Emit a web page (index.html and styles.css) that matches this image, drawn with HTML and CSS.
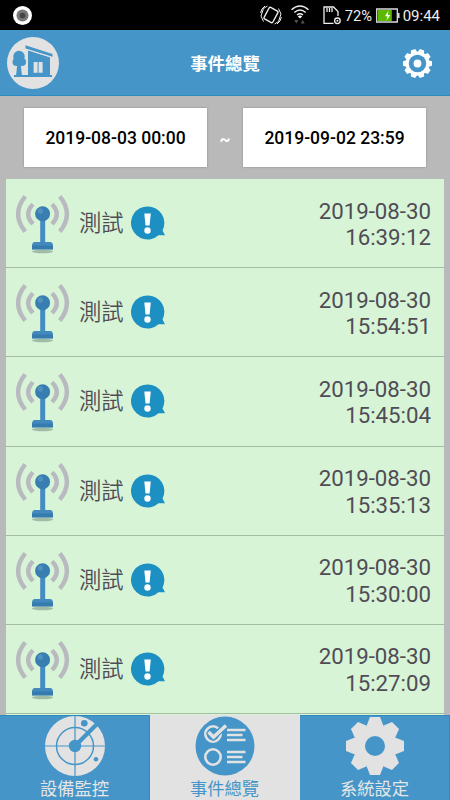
FILE: index.html
```html
<!DOCTYPE html>
<html lang="zh-Hant">
<head>
<meta charset="utf-8">
<title>事件總覽</title>
<link rel="stylesheet" href="styles.css">
</head>
<body>
<svg class="defs" width="0" height="0">
  <defs>
    <symbol id="sensor" viewBox="0 0 56 62">
      <ellipse cx="27.500" cy="57.500" rx="10.500" ry="1.800" fill="#7c9685" opacity=".6"/>
      <g fill="none" stroke="#b9bac0" stroke-width="4.400">
        <path d="M10.200 2.300Q-4 20 10.200 37.700"/>
        <path d="M44.800 2.300Q59 20 44.800 37.700"/>
        <path d="M18 10.200Q8.400 20 18 30"/>
        <path d="M37 10.200Q46.600 20 37 30"/>
      </g>
      <path d="M25.200 26h5v24h-5z" fill="#458cc0"/>
      <path d="M20 48h15q3 0 3 4H17q0-4 3-4z" fill="#4289bd"/>
      <path d="M17 51.500h21v4.100H17z" fill="#367bad"/>
      <circle cx="27.600" cy="19.800" r="7.500" fill="#397eb1"/>
      <circle cx="25.400" cy="17" r="2.700" fill="#5795c3" opacity=".8"/>
    </symbol>
    <symbol id="alert" viewBox="0 0 34 34">
      <path d="M16.500.4A16.500 16.500 0 1 0 27.500 29.200L34 29.300 31.500 24.500A16.500 16.500 0 0 0 16.500.4z" fill="#1c8fc3"/>
      <path d="M13.300 7.400h6.500l-1.200 12.200h-4.100z" fill="#fff"/>
      <circle cx="16.500" cy="24.500" r="3.200" fill="#fff"/>
    </symbol>
    <path id="tooth" d="M-5-29H5L8.500-20H-8.500z"/>
    <path id="cog" d="M-2.300-14.500H2.300L3.500-10H-3.500z"/>
  </defs>
</svg>
<div class="status">
  <svg class="recorder" viewBox="0 0 18 18"><circle cx="9" cy="9" r="9" fill="#fff"/><circle cx="9" cy="9" r="5.700" fill="#777"/><circle cx="9" cy="9" r="2.700" fill="#444"/></svg>
  <svg class="vibrate" viewBox="0 0 22 20" fill="none" stroke="#eee"><rect x="6" y="3.500" width="10" height="13" rx="1.200" transform="rotate(28 11 10)" stroke-width="1.400"/><path d="M7.500 1 3.500 3.500 1 11l2.500 5.500M5 1 2 4 .6 8M14.500 19l4-2.500L21 9l-2.500-5.500M17 19l3-3 1.400-4" stroke-width="1"/></svg>
  <svg class="wifi" viewBox="0 0 18 20"><g fill="none" stroke="#eee" stroke-width="1.500"><path d="M.5 4.700Q9-2.700 17.500 4.700M3.300 7.500Q9 2.500 14.700 7.500M6 10Q9 7.500 12 10"/></g><path d="M6.800 11.300Q9 9.600 11.200 11.300L9 13.500z" fill="#fff"/><path d="M3.300 15h4l-2 3.600zM9.700 18.600h4l-2-3.600z" fill="#555"/></svg>
  <svg class="sd" viewBox="0 0 18 19"><g fill="none" stroke="#eee" stroke-width="1.300"><path d="M10.500 17.300H1V1h9.500L15 5.600V10M4 2v4M6.500 2v4M9 2v4"/><circle cx="14.400" cy="14.800" r="2.800"/></g><circle cx="14.400" cy="14.800" r="1" fill="#eee"/></svg>
  <span class="percent">72%</span>
  <svg class="battery" viewBox="0 0 24 15"><path d="M.7 1h20.600v13H.7z" fill="none" stroke="#ddd" stroke-width="1.300"/><path d="M1.800 2h14v11h-14z" fill="#5cb800"/><path d="M22 5h1.500v5H22z" fill="#ddd"/><path d="M12.500 2.700 9 8.200h2.500l-1 4.200L14.300 7h-2.500z" fill="#fff"/></svg>
  <span class="clock">09:44</span>
</div>
<header class="header">
  <svg class="logo" viewBox="0 0 52 52">
    <circle cx="26" cy="26" r="26" fill="#e2e2e2"/>
    <g fill="#4695c8"><path d="M18.500 8.300 45.500 17v2.800L18.500 11.400zM21 13.200l22 7v18H21z"/><path d="M7 38h38v2H7z"/><circle cx="12" cy="19.500" r="5.700"/><circle cx="9.500" cy="25" r="4"/><circle cx="15" cy="25" r="4"/><path d="M10.500 26h3l1.500 12.500H9z"/></g>
    <path d="M26.600 25h4v10.700h-4zM31.600 25h4v10.700h-4z" fill="#e2e2e2"/>
    <path d="M20 12.700 43.500 20" stroke="#e2e2e2" stroke-width=".8"/>
  </svg>
  <h1>事件總覽</h1>
  <svg class="settings" viewBox="-14.500 -14.500 29 29">
    <g fill="#fff"><circle r="12"/>
      <use href="#cog" transform="rotate(18)"/><use href="#cog" transform="rotate(54)"/><use href="#cog" transform="rotate(90)"/><use href="#cog" transform="rotate(126)"/><use href="#cog" transform="rotate(162)"/><use href="#cog" transform="rotate(198)"/><use href="#cog" transform="rotate(234)"/><use href="#cog" transform="rotate(270)"/><use href="#cog" transform="rotate(306)"/><use href="#cog" transform="rotate(342)"/></g>
    <circle r="8.700" fill="#4695c8"/><circle r="3.900" fill="#fff"/>
  </svg>
</header>
<div class="range"><button class="date">2019-08-03 00:00</button><span class="tilde">~</span><button class="date">2019-09-02 23:59</button></div>
<main class="events">
  <article class="event"><svg class="sensor"><use href="#sensor"/></svg><span class="name">測試</span><svg class="alert"><use href="#alert"/></svg><time>2019-08-30<br>16:39:12</time></article>
  <article class="event"><svg class="sensor"><use href="#sensor"/></svg><span class="name">測試</span><svg class="alert"><use href="#alert"/></svg><time>2019-08-30<br>15:54:51</time></article>
  <article class="event"><svg class="sensor"><use href="#sensor"/></svg><span class="name">測試</span><svg class="alert"><use href="#alert"/></svg><time>2019-08-30<br>15:45:04</time></article>
  <article class="event"><svg class="sensor"><use href="#sensor"/></svg><span class="name">測試</span><svg class="alert"><use href="#alert"/></svg><time>2019-08-30<br>15:35:13</time></article>
  <article class="event"><svg class="sensor"><use href="#sensor"/></svg><span class="name">測試</span><svg class="alert"><use href="#alert"/></svg><time>2019-08-30<br>15:30:00</time></article>
  <article class="event"><svg class="sensor"><use href="#sensor"/></svg><span class="name">測試</span><svg class="alert"><use href="#alert"/></svg><time>2019-08-30<br>15:27:09</time></article>
</main>
<nav class="tabs">
  <div class="tab">
    <svg viewBox="0 0 60 60"><circle cx="30" cy="30" r="30" fill="#e2e2e2"/><g fill="none" stroke="#4695c8"><circle cx="30" cy="30" r="18.500" stroke-width="1.500"/><path d="M30 0v60M0 30h60" stroke-width="1.200"/><path d="M30 30 53 7" stroke-width="4.200"/></g><g fill="#4695c8"><circle cx="30" cy="30" r="6.200"/><circle cx="39.300" cy="7.300" r="3.300"/><circle cx="51" cy="43.300" r="2.300"/></g></svg>
    <span>設備監控</span>
  </div>
  <div class="tab active">
    <svg viewBox="0 0 60 60"><circle cx="30" cy="30" r="29.500" fill="#4695c8"/><g fill="none" stroke="#e2e2e2" stroke-width="2.600"><circle cx="18" cy="18" r="7.700"/><circle cx="18" cy="41" r="7.700"/><path d="M32 14h18.500M32 19h15.500M32 24h18.500M32 36h18.500M32 41h15.500M32 46h18.500" stroke-width="2.300"/></g><path d="m13 15.500 5.500 5.500L30.500 9.500" fill="none" stroke="#4695c8" stroke-width="6"/><path d="m13.500 16 5 5L31 9.500" fill="none" stroke="#e2e2e2" stroke-width="3.500"/></svg>
    <span>事件總覽</span>
  </div>
  <div class="tab">
    <svg viewBox="-30 -30 60 60"><g fill="#e2e2e2"><circle r="21.700"/><use href="#tooth"/><use href="#tooth" transform="rotate(45)"/><use href="#tooth" transform="rotate(90)"/><use href="#tooth" transform="rotate(135)"/><use href="#tooth" transform="rotate(180)"/><use href="#tooth" transform="rotate(225)"/><use href="#tooth" transform="rotate(270)"/><use href="#tooth" transform="rotate(315)"/></g><circle r="10" fill="#4695c8"/></svg>
    <span>系統設定</span>
  </div>
</nav>
</body>
</html>
```
FILE: styles.css
```css
* { box-sizing: border-box; }
body {
  margin: 0;
  width: 450px;
  height: 800px;
  overflow: hidden;
  display: flex;
  flex-direction: column;
  background: #b9b9b9;
  font-family: Roboto, "Noto Sans CJK TC", sans-serif;
}
svg { display: block; flex: none; }
.defs { position: absolute; }
.status {
  height: 30px;
  flex: none;
  display: flex;
  align-items: center;
  background: #000;
  color: #eee;
  font-size: 15px;
  padding: 0 10px 0 13px;
}
.recorder { width: 19px; height: 19px; }
.vibrate { width: 22px; height: 20px; margin-left: auto; }
.wifi { width: 18px; height: 20px; margin-left: 9px; }
.sd { width: 18px; height: 19px; margin-left: 14px; }
.percent { margin-left: 4px; width: 27px; font-size: 14.700px; }
.percent, .clock { padding-top: 1px; }
.battery { width: 24px; height: 15px; margin: 0 3px 0 4px; }
.header {
  height: 66px;
  flex: none;
  display: grid;
  grid-template-columns: 52px 1fr 52px;
  align-items: center;
  padding: 0 7px;
  background: #4695c8;
  border-bottom: 1px solid #3089bf;
}
.logo { width: 52px; height: 52px; }
.header h1 {
  margin: 0;
  padding-top: 2px;
  text-align: center;
  color: #fff;
  font-size: 17.400px;
  line-height: 26px;
}
.settings { width: 29px; height: 29px; justify-self: center; margin-top: 1px; }
.range {
  height: 83px;
  flex: none;
  padding: 12px 24px 0;
  display: grid;
  grid-template-columns: 183px 1fr 183px;
}
.date {
  height: 59px;
  padding: 0;
  border: 0;
  background: #fff;
  box-shadow: 0 0 2px #888;
  color: #000;
  font: 500 17.500px Roboto, sans-serif;
}
.tilde {
  color: #fff;
  font-size: 17px;
  font-weight: 700;
  text-align: center;
  line-height: 63px;
}
.events {
  height: 536px;
  flex: none;
  margin: 0 6px;
  background: #d7f4d7;
}
.event {
  height: 89.200px;
  display: flex;
  align-items: center;
  padding: 0 13px 0 9px;
  border-bottom: 1px solid #a3bda3;
  color: #504c55;
}
.sensor { width: 56px; height: 62px; margin-top: 4px; }
.name {
  margin-left: 8px;
  font-size: 22.300px;
  font-weight: 350;
  line-height: 32px;
}
.alert { width: 34px; height: 34px; margin-left: 7px; }
time {
  margin-left: auto;
  text-align: right;
  font-size: 22.250px;
  line-height: 26.600px;
  margin-top: 2px;
}
.tabs {
  flex: 1;
  display: grid;
  grid-template-columns: repeat(3, 1fr);
}
.tab {
  display: flex;
  flex-direction: column;
  align-items: center;
  background: #4695c8;
  border: 1px solid #3089bf;
  border-width: 1px 1px 0 0;
  color: #e5e5e5;
  font-size: 17.300px;
  line-height: 26px;
}
.tab svg { width: 60px; height: 60px; }
.active {
  background: #e2e2e2;
  border-color: #e2e2e2;
  color: #4695c8;
}
```
